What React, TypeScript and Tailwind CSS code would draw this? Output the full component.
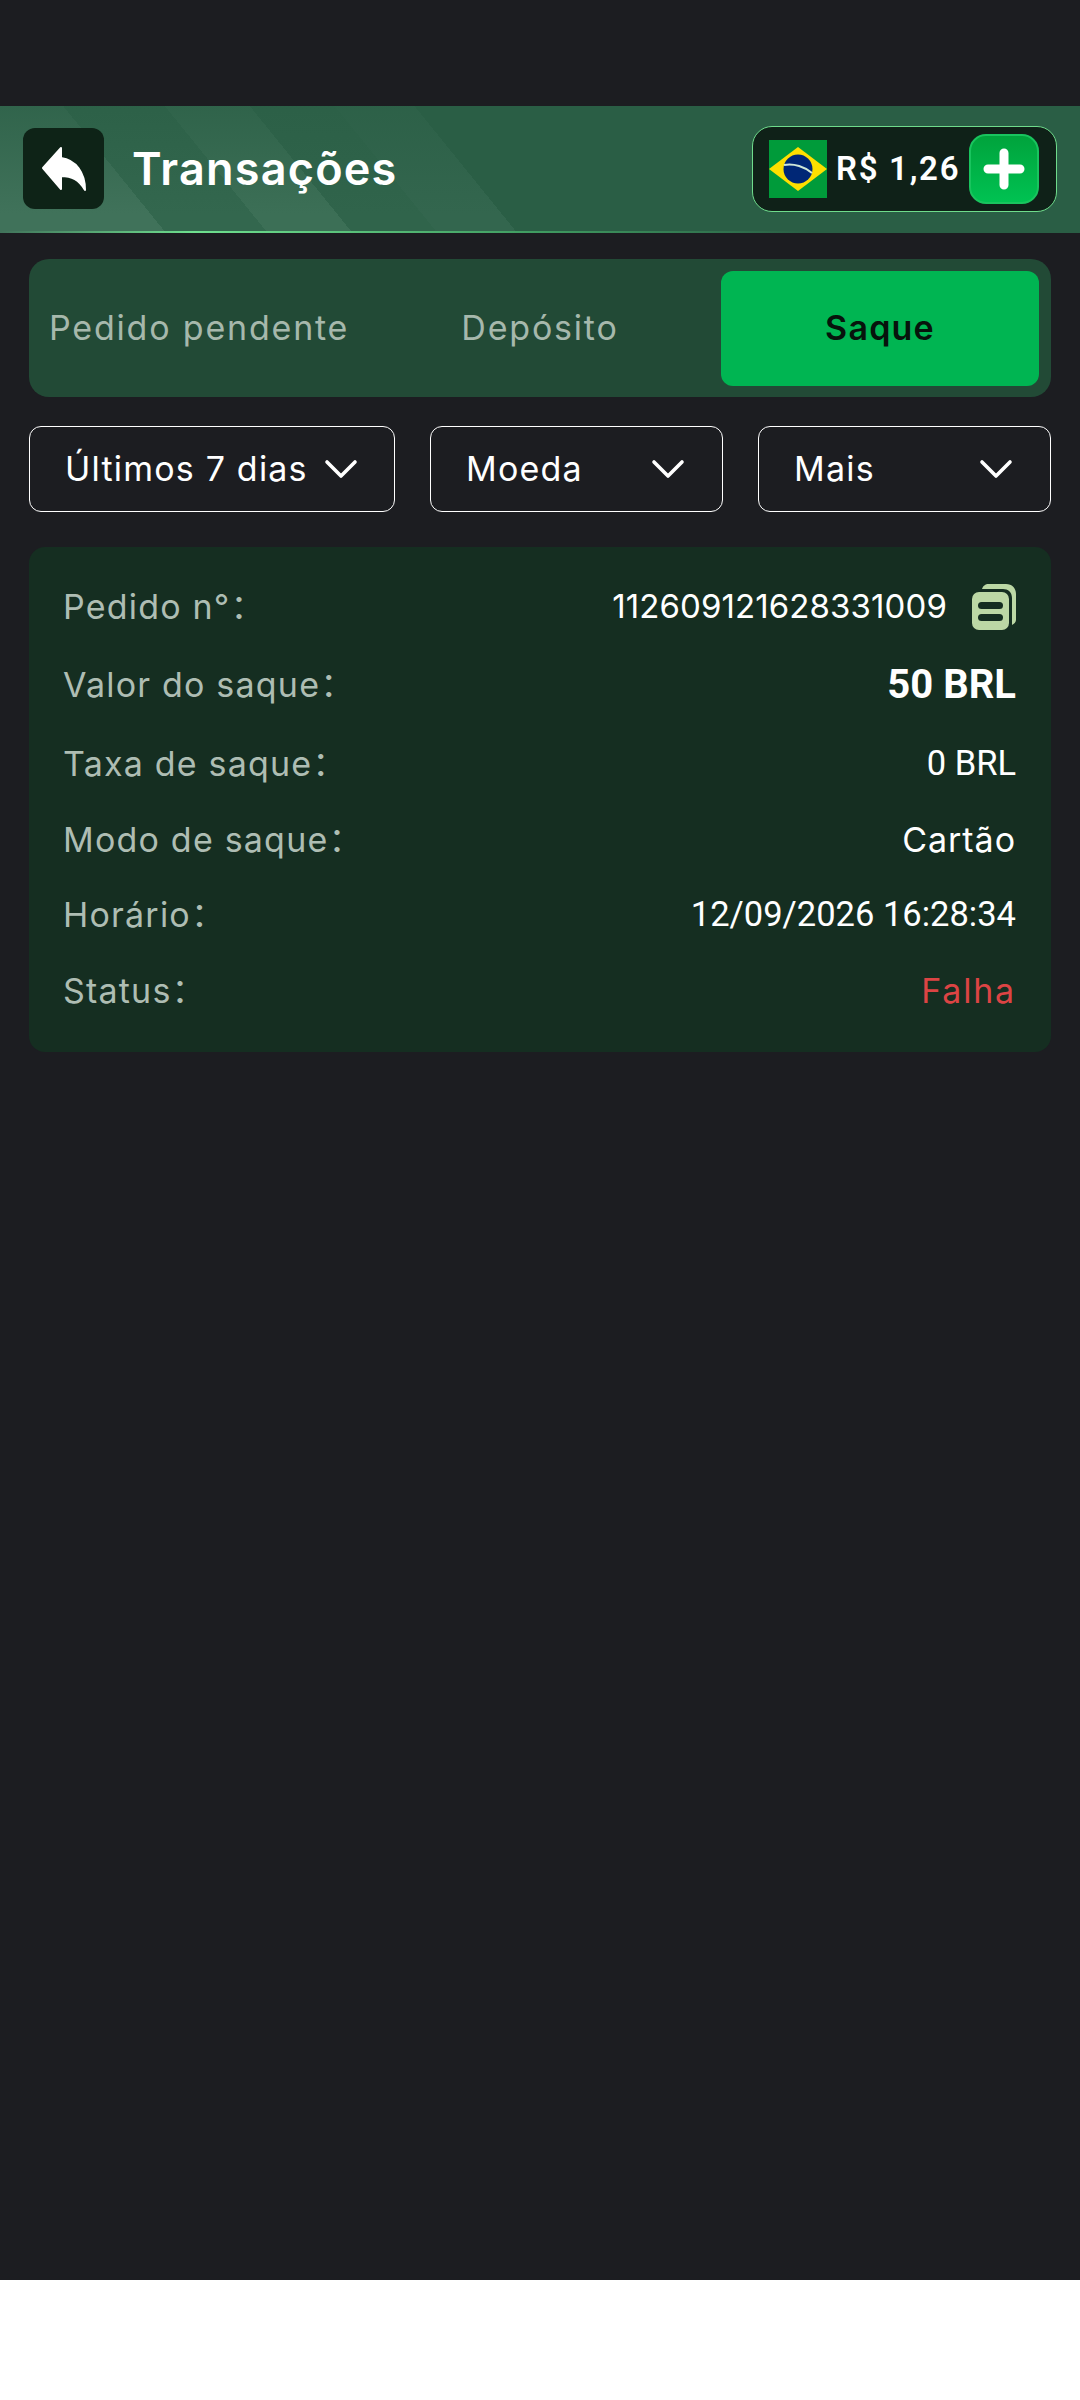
const TEXT_FONT = "font-['Inter','Noto_Sans_CJK_SC',sans-serif]";

function BackIcon() {
  return (
    <svg width="46" height="46" viewBox="0 0 46 46" fill="#fff" stroke="#fff" strokeWidth="2" strokeLinejoin="round">
      <path d="M2 22 L20 2 V12 C35 14 44 27 44 44 C38 34 31 30 20 30 V43 Z" />
    </svg>
  );
}

function Flag() {
  return (
    <svg width="58" height="58" viewBox="0 0 58 58" className="shrink-0">
      <rect width="58" height="58" fill="#009b3a" />
      <path d="M0 29 L29 7 L58 29 L29 51 Z" fill="#fedf00" />
      <circle cx="29" cy="29" r="14.5" fill="#002776" />
      <path d="M15 25 C25 23 36 27 43 33" fill="none" stroke="#cfe8d8" strokeWidth="2" />
    </svg>
  );
}

function Chevron() {
  return (
    <svg width="34" height="20" viewBox="0 0 34 20" fill="none" stroke="#fff" strokeWidth="3.6" strokeLinecap="round" strokeLinejoin="round" className="shrink-0">
      <path d="M3 3 L17 17 L31 3" />
    </svg>
  );
}

function CopyIcon() {
  return (
    <svg width="44" height="46" viewBox="0 0 44 46" className="shrink-0">
      <path d="M10 5 C11 2 13 0 17 0 H34 C40 0 44 4 44 10 V36 C44 38 42 40 40 41 V14 C40 8 36 5 31 5 Z" fill="#bcd8a5" />
      <rect x="0" y="8" width="37" height="38" rx="7" fill="#bcd8a5" />
      <rect x="6" y="18" width="25" height="7" rx="3.5" fill="#152e21" />
      <rect x="6" y="30" width="25" height="7" rx="3.5" fill="#152e21" />
    </svg>
  );
}

function Filter({ label, className }: { label: string; className: string }) {
  return (
    <div className={`flex items-center h-[86px] border-[1.5px] border-white rounded-[12px] text-white text-[34px] tracking-[1.2px] ${className}`}>
      <span className="whitespace-nowrap pb-[2px]">{label}</span>
      <Chevron />
    </div>
  );
}

function Row({ label, children, className }: { label: string; children: React.ReactNode; className: string }) {
  return (
    <div className={`flex items-center justify-between ${className}`}>
      <span className="text-[34px] text-[#aebdb3] tracking-[1.2px] whitespace-nowrap pb-[2px]">{label}：</span>
      {children}
    </div>
  );
}

export default function App() {
  return (
    <div className={`bg-white min-h-[2400px] ${TEXT_FONT}`}>
      <div className="bg-[#1c1d21] h-[2280px] pt-[106px]">
        <header className="h-[127px] flex flex-col bg-[linear-gradient(180deg,#2a5e45b0,transparent_85%),linear-gradient(51deg,#40725a_129px,#33674e_129px,#33674e_208px,#3c6f56_208px,#3c6f56_274px,#30644b_274px,#30644b_340px,#33664e_340px,#33664e_402px,#2a5e45_402px)]">
          <div className="flex-1 flex items-center pl-[23px] pr-[23px]">
            <div className="w-[81px] h-[81px] rounded-[12px] bg-[#0e2317] flex items-center justify-center">
              <BackIcon />
            </div>
            <h1 className="ml-[28px] text-[45px] font-semibold text-white tracking-[1.2px]">Transações</h1>
            <div className="ml-auto w-[305px] h-[86px] rounded-[20px] border-[1.5px] border-[#6fdc8c] bg-[#0f2118] flex items-center pl-[16px] pr-[17px]">
              <Flag />
              <span className="ml-[9px] font-['Roboto',sans-serif] font-semibold text-[33px] text-white tracking-[1.7px] whitespace-nowrap">R$ 1,26</span>
              <div className="ml-auto w-[70px] h-[70px] rounded-[17px] border-2 border-[#19c45e] bg-[linear-gradient(180deg,#00a33c,#00c252)] flex items-center justify-center">
                <svg width="42" height="42" viewBox="0 0 42 42" stroke="#fff" strokeWidth="9" strokeLinecap="round">
                  <path d="M21 5 V37 M5 21 H37" />
                </svg>
              </div>
            </div>
          </div>
          <div className="h-[2px] bg-[linear-gradient(90deg,transparent,#6fe08f_18%,#3f9a60_50%,transparent_75%)]" />
        </header>

        <main className="px-[29px]">
          <div className="mt-[26px] h-[138px] rounded-[20px] bg-[#224a36] flex items-center pl-[20px] pr-[12px] text-[34px] tracking-[1.8px] text-[#a6b8ac]">
            <span className="w-[300px] whitespace-nowrap pb-[2px]">Pedido pendente</span>
            <span className="w-[372px] text-center pl-[10px] pb-[2px]">Depósito</span>
            <span className="ml-auto shrink-0 w-[318px] h-[115px] rounded-[12px] bg-[#00b552] flex items-center justify-center font-semibold tracking-[1.2px] text-[#07130c] pb-[2px]">Saque</span>
          </div>

          <div className="mt-[29px] flex justify-between">
            <Filter label="Últimos 7 dias" className="w-[366px] pl-[35px] pr-[36px] justify-between" />
            <Filter label="Moeda" className="w-[293px] pl-[35px] pr-[37px] justify-between" />
            <Filter label="Mais" className="w-[293px] pl-[35px] pr-[37px] justify-between" />
          </div>

          <section className="mt-[35px] h-[505px] rounded-[16px] bg-[#152e21] pl-[34px] pr-[35px] pt-[34px] text-white">
            <Row label="Pedido n°" className="h-[52px]">
              <div className="flex items-center gap-[25px]">
                <span className="text-[33px] tracking-[0.1px]">112609121628331009</span>
                <CopyIcon />
              </div>
            </Row>
            <Row label="Valor do saque" className="h-[52px] mt-[26px]">
              <span className="font-['Roboto',sans-serif] font-bold text-[40px]">50 BRL</span>
            </Row>
            <Row label="Taxa de saque" className="h-[52px] mt-[27px]">
              <span className="font-['Roboto',sans-serif] text-[34.5px]">0 BRL</span>
            </Row>
            <Row label="Modo de saque" className="h-[52px] mt-[24px]">
              <span className="text-[34px] tracking-[0.95px] pb-[2px]">Cartão</span>
            </Row>
            <Row label="Horário" className="h-[52px] mt-[23px]">
              <span className="font-['Roboto',sans-serif] text-[34.5px]">12/09/2026 16:28:34</span>
            </Row>
            <Row label="Status" className="h-[52px] mt-[24px]">
              <span className="text-[34px] tracking-[1.8px] text-[#dc4444] pb-[2px]">Falha</span>
            </Row>
          </section>
        </main>
      </div>
    </div>
  );
}
